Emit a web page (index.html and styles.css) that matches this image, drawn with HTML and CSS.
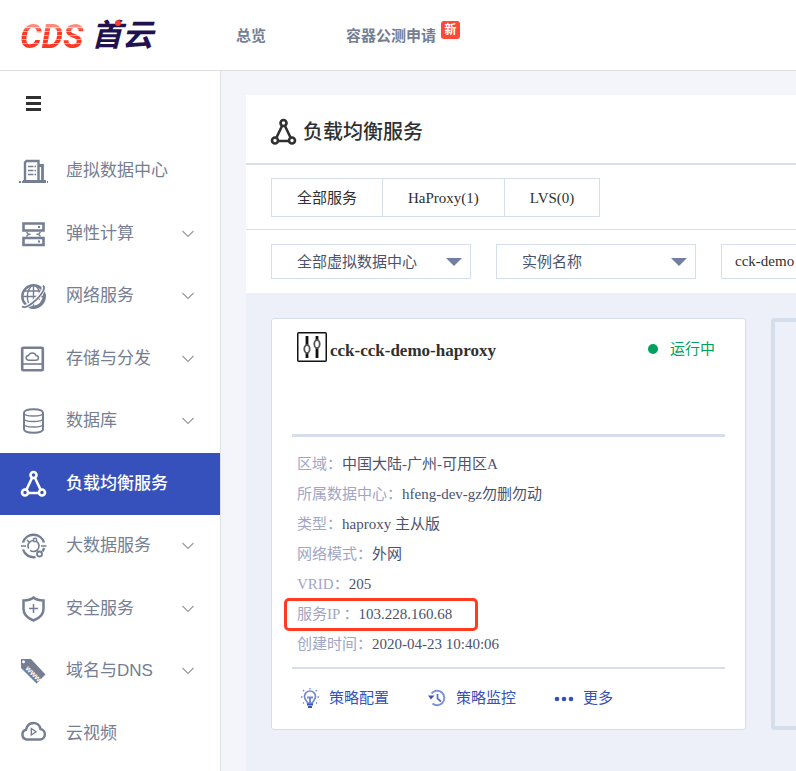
FILE: index.html
```html
<!DOCTYPE html>
<html lang="zh-CN">
<head>
<meta charset="utf-8">
<meta name="viewport" content="width=device-width, initial-scale=1">
<title>负载均衡服务</title>
<link rel="stylesheet" href="styles.css">
</head>
<body>
<svg class="sprite" aria-hidden="true">
  <symbol id="triangle" viewBox="0 0 30 30">
    <g fill="none" stroke="currentColor" stroke-width="2.6">
      <circle cx="15.500" cy="6" r="3"/><circle cx="7" cy="23.500" r="3"/><circle cx="24" cy="23.500" r="3"/>
      <path d="M14 9 8.500 20.500M17 9 22.500 20.500M10 24H21"/>
    </g>
  </symbol>
  <symbol id="chevron" viewBox="0 0 12 8">
    <path d="M.5 1 6 6.500 11.500 1" fill="none" stroke="currentColor" stroke-width="1.100"/>
  </symbol>
</svg>
<header class="topbar">
  <a class="logo" href="#"><span class="logo-latin">CDS</span><span class="logo-han">首云</span></a>
  <nav class="topnav">
    <a href="#">总览</a>
    <a href="#">容器公测申请<span class="new">新</span></a>
  </nav>
</header>
<div class="shell">
  <aside class="sidebar">
    <button class="toggle" type="button" aria-label="菜单">
      <svg width="15" height="15" viewBox="0 0 15 15"><path d="M0 1.500H15M0 7.500H15M0 13.500H15" stroke="currentColor" stroke-width="3"/></svg>
    </button>
    <ul class="menu">
      <li><a href="#">
        <svg class="icon" viewBox="0 0 30 30"><g fill="none" stroke="currentColor"><path d="M7 25V6.500L8.500 5H20.500V25" stroke-width="2.400"/><path d="M21 9.500H24.500V25" stroke-width="2.800"/><path d="M10 10.500H18M10 14.500H18M10 18.500H18" stroke-width="1.400" stroke-dasharray="5.500 1"/><path d="M5 25H28" stroke-width="2"/><path d="M1 26H31" stroke-width="2" stroke-dasharray="2 1 24 1"/></g></svg>
        <span>虚拟数据中心</span></a></li>
      <li><a href="#">
        <svg class="icon" viewBox="0 0 30 30"><g fill="none" stroke="currentColor"><path d="M5.500 4.500H25.500V11.500H5.500ZM5.500 19H25.500V26H5.500Z" stroke-width="2.600"/><path d="M8.500 13 10.500 15.200 8.500 17.500M12.500 15.200H10M22.500 13 20.500 15.200 22.500 17.500M18.500 15.200H21" stroke-width="1.400"/><path d="M20 8H22M20 22.500H22" stroke-width="2"/></g></svg>
        <span>弹性计算</span><svg class="chev"><use href="#chevron"/></svg></a></li>
      <li><a href="#">
        <svg class="icon" viewBox="0 0 30 30"><g fill="none" stroke="currentColor"><circle cx="15.500" cy="15.500" r="11.200" stroke-width="2.400"/><path d="M5 15.500H26M6.500 10H24.500M15.500 5V26M13.500 5C8.500 10 8.500 18 11 23.500M18 5C22 9 22.500 14 21 19" stroke-width="1.400"/><path d="M25 5C28 9 19 18 14 22 9 26 5 27 4.500 25" stroke="#fff" stroke-width="4"/><path d="M25 4.500C29 8 20 18 14.500 22 9.500 26 5 27.500 4.500 25" stroke-width="1.800"/><path d="M26.500 13C26 20 22 26 14 26.500" stroke-width="2.800"/></g></svg>
        <span>网络服务</span><svg class="chev"><use href="#chevron"/></svg></a></li>
      <li><a href="#">
        <svg class="icon" viewBox="0 0 30 30"><g fill="none" stroke="currentColor"><rect x="4.200" y="3.700" width="20.600" height="22.600" rx="1" stroke-width="2.600"/><path d="M5 20H24" stroke-width="1.600"/><path d="M11 16.200C7 16.200 7.500 11.500 10.500 11.500 12 8 17 8.500 18 11.500 21 11.500 21.500 16.200 18 16.200Z" stroke-width="1.500"/></g></svg>
        <span>存储与分发</span><svg class="chev"><use href="#chevron"/></svg></a></li>
      <li><a href="#">
        <svg class="icon" viewBox="0 0 30 30"><g fill="none" stroke="currentColor" stroke-width="2"><path d="M6 7V23C6 28 25 28 25 23V7C25 2 6 2 6 7Z"/><path d="M6 7C6 11 25 11 25 7M6 12.500C6 16.500 25 16.500 25 12.500M6 18C6 22 25 22 25 18" stroke-width="1.400"/></g></svg>
        <span>数据库</span><svg class="chev"><use href="#chevron"/></svg></a></li>
      <li class="active"><a href="#" aria-current="page">
        <svg class="icon"><use href="#triangle"/></svg>
        <span>负载均衡服务</span></a></li>
      <li><a href="#">
        <svg class="icon" viewBox="0 0 30 30"><g fill="none" stroke="currentColor"><path d="M5 11.500A11 11 0 0 1 26 11.500M26.200 17 24.500 20.500M5 18.500A11 11 0 0 0 17.500 26" stroke-width="2.400"/><circle cx="15.500" cy="15" r="5.500" stroke-width="1.600" stroke-dasharray="12 2"/><path d="M3 15H8M23 15H28.500M9 9 11 11M20 20 21 21" stroke-width="1.500"/><circle cx="17" cy="9" r="1.700" stroke-width="1.500" fill="#fff"/><circle cx="21.500" cy="23" r="2.500" stroke-width="1.800"/></g></svg>
        <span>大数据服务</span><svg class="chev"><use href="#chevron"/></svg></a></li>
      <li><a href="#">
        <svg class="icon" viewBox="0 0 30 30"><g fill="none" stroke="currentColor"><path d="M15.500 3.500C13 5.500 9 6.500 5.500 6.500V15C5.500 20 9 24 15.500 26.500 22 24 25.500 20 25.500 15V6.500C22 6.500 18 5.500 15.500 3.500Z" stroke-width="2.500"/><path d="M11 14.500H20M15.500 10V19" stroke-width="1.500"/></g></svg>
        <span>安全服务</span><svg class="chev"><use href="#chevron"/></svg></a></li>
      <li><a href="#">
        <svg class="icon" viewBox="0 0 30 30"><path d="M3 3H13L27.500 18.500 18.500 27.500 3 12Z" fill="currentColor"/><circle cx="5.500" cy="5.800" r="1.500" fill="#fff"/><text class="tag-text" x="7" y="13" transform="rotate(45 7 13)">www</text></svg>
        <span>域名与DNS</span><svg class="chev"><use href="#chevron"/></svg></a></li>
      <li><a href="#">
        <svg class="icon" viewBox="0 0 30 30"><g fill="none" stroke="currentColor"><path d="M8.500 20.500A5 5 0 0 1 8 10.800C10 1.500 21 2 22.500 10A5.300 5.300 0 0 1 22 20.500Z" stroke-width="2.500"/><path d="M13.300 9.500V16L18 12.700Z" stroke-width="1.400"/></g></svg>
        <span>云视频</span></a></li>
    </ul>
  </aside>
  <main class="content">
    <section class="panel">
      <h1 class="title"><svg class="icon"><use href="#triangle"/></svg>负载均衡服务</h1>
      <div class="tabs-row">
        <div class="tabs">
          <button type="button">全部服务</button><button type="button">HaProxy(1)</button><button type="button">LVS(0)</button>
        </div>
      </div>
      <form class="filters">
        <div class="pick"><select aria-label="数据中心"><option>全部虚拟数据中心</option></select></div>
        <div class="pick"><select aria-label="查询字段"><option>实例名称</option></select></div>
        <input class="search" type="text" aria-label="关键字" value="cck-demo">
      </form>
    </section>
    <section class="cards">
      <article class="card">
        <div class="card-head">
          <svg class="badge" viewBox="0 0 30 30"><rect x=".75" y=".75" width="28.500" height="28.500" rx="1" fill="#fff" stroke="#111" stroke-width="1.500"/><g stroke="#111" fill="#fff"><path d="M10 4V26M20 4V26" stroke-width="2.800"/><ellipse cx="10" cy="17" rx="2.700" ry="4" stroke="#555" stroke-width="1.800"/><ellipse cx="20" cy="12" rx="2.700" ry="4" stroke="#555" stroke-width="1.800"/></g></svg>
          <h2>cck-cck-demo-haproxy</h2>
          <span class="status">运行中</span>
        </div>
        <dl class="facts">
          <div><dt>区域：</dt><dd>中国大陆-广州-可用区A</dd></div>
          <div><dt>所属数据中心：</dt><dd>hfeng-dev-gz勿删勿动</dd></div>
          <div><dt>类型：</dt><dd>haproxy 主从版</dd></div>
          <div><dt>网络模式：</dt><dd>外网</dd></div>
          <div><dt>VRID：</dt><dd>205</dd></div>
          <div class="marked"><dt>服务IP ：</dt><dd>103.228.160.68</dd></div>
          <div><dt>创建时间：</dt><dd>2020-04-23 10:40:06</dd></div>
        </dl>
        <div class="actions">
          <a href="#"><svg viewBox="0 0 20 20"><g fill="none" stroke="#7488d2"><path d="M7.500 15C7.500 13 4.500 12 4.500 8.500A5.500 5.500 0 0 1 15.500 8.500C15.500 12 12.500 13 12.500 15Z" stroke-width="1.700"/><path d="M10 15V10M7 9.500H13" stroke-width="2"/><path d="M10 0V1.500M3 2 4.200 3.200M17 2 15.800 3.200M1 9H2.500M17.500 9H19M3 15.500 4 14.500M17 15.500 16 14.500" stroke-width="1.300"/><path d="M7 16.500H13M8 19H12" stroke="#3b54bd" stroke-width="1.800"/></g></svg>策略配置</a>
          <a href="#"><svg viewBox="0 0 20 20"><path d="M4.500 5.500A7.200 7.200 0 1 1 5.500 15.500" fill="none" stroke="#8193d6" stroke-width="2"/><path d="M10.500 6V10.500L14 13.500" fill="none" stroke="#5c71c8" stroke-width="1.800"/><path d="M1 7.500H7.500L4 11.500Z" fill="#3b54bd"/></svg>策略监控</a>
          <a href="#"><svg viewBox="0 0 20 20"><g fill="#3650bb"><circle cx="3" cy="11" r="2.300"/><circle cx="10" cy="11" r="2.300"/><circle cx="17" cy="11" r="2.300"/></g></svg>更多</a>
        </div>
      </article>
      <article class="card empty"></article>
    </section>
  </main>
</div>
</body>
</html>
```
FILE: styles.css
```css
*, *::before, *::after { box-sizing: border-box; }

body {
  margin: 0;
  min-height: 100vh;
  display: flex;
  flex-direction: column;
  overflow: hidden;
  background: #f4f5fa;
  color: #303030;
  font: 15px/20px "Liberation Serif", "Noto Sans CJK SC", serif;
}

a { color: inherit; text-decoration: none; }
button, select, input { font: inherit; color: inherit; }
h1, h2, ul, dl, dd { margin: 0; padding: 0; }
.sprite { display: none; }

.topbar {
  display: flex;
  align-items: center;
  height: 71px;
  padding-top: 2px;
  background: #fff;
  border-bottom: 1px solid #dedede;
  font-family: "Liberation Sans", "Noto Sans CJK SC", sans-serif;
}

.logo {
  position: relative;
  display: flex;
  align-items: center;
  gap: 6px;
  width: 216px;
  padding-left: 20px;
  line-height: 40px;
}

.logo::after {
  content: "";
  position: absolute;
  left: 115px;
  top: 4px;
  width: 6px;
  height: 6px;
  border-radius: 50%;
  background: #ff3e2d;
}

.logo-latin {
  padding-right: 2px;
  font: italic bold 34px/40px Roboto, "Liberation Sans", sans-serif;
  color: transparent;
  background:
    repeating-linear-gradient(transparent 0 3px, rgba(255, 255, 255, .6) 3px 4px) 0 0 / 100% 28px no-repeat,
    linear-gradient(#ff8a7c 11px, #ff3823 15px);
  background-clip: text;
  -webkit-background-clip: text;
}

.logo-han { color: #21114f; font-size: 31px; font-style: italic; font-weight: bold; }

.topnav {
  display: flex;
  gap: 80px;
  padding-left: 20px;
  font-weight: bold;
  color: #757e93;
  white-space: nowrap;
}

.topnav a { position: relative; }

.new {
  position: absolute;
  left: 95px;
  top: -5px;
  width: 19px;
  height: 18px;
  border-radius: 3px;
  background: #ff4938;
  color: #fff;
  font-size: 12px;
  line-height: 18px;
  text-align: center;
}

.shell { display: flex; flex: 1; }

.sidebar {
  flex: 0 0 221px;
  background: #fff;
  border-right: 1px solid #e0e1e4;
  font-family: "Liberation Sans", "Noto Sans CJK SC", sans-serif;
}

.toggle {
  display: flex;
  align-items: center;
  height: 65px;
  margin-bottom: 4px;
  padding: 0 26px;
  border: 0;
  background: none;
  color: #303030;
}

.menu {
  display: grid;
  grid-template-rows: repeat(10, 1fr);
  height: 625px;
  list-style: none;
  color: #757e93;
  font-size: 17px;
}

.menu a {
  display: flex;
  align-items: center;
  gap: 18px;
  height: 100%;
  padding: 0 26px 0 18px;
}

.icon { width: 30px; height: 30px; }
.tag-text { fill: #fff; font-size: 8px; font-weight: bold; }
.chev { width: 12px; height: 8px; margin-left: auto; color: #999; }
.active { background: #3651bb; color: #fff; font-weight: 500; }

.content {
  flex: 1;
  display: flex;
  flex-direction: column;
  min-width: 0;
  padding: 24px 0 0 25px;
  overflow: hidden;
}

.panel { background: #fff; }

.title {
  display: flex;
  align-items: center;
  gap: 5px;
  height: 70px;
  padding: 6px 22px 0;
  border-bottom: 2px solid #d7deeb;
  font-size: 20px;
  font-weight: 500;
}

.tabs-row { padding: 13px 25px 12px; border-bottom: 1px solid #d7deeb; }
.tabs { display: flex; }

.tabs button {
  height: 39px;
  padding: 0 25px;
  border: 1px solid #d7deeb;
  border-right-width: 0;
  background: #fff;
}

.tabs button:last-child { border-right-width: 1px; }
.filters { display: flex; gap: 25px; padding: 14px 25px; }
.pick { position: relative; flex: 0 0 200px; }

.pick::after {
  content: "";
  position: absolute;
  right: 9px;
  top: 14px;
  border: 8px solid transparent;
  border-top-color: #727ea4;
  border-bottom-width: 0;
  pointer-events: none;
}

.pick select {
  appearance: none;
  width: 100%;
  height: 35px;
  padding: 0 25px;
  border: 1px solid #d7deeb;
  border-radius: 0;
  background: #fff;
  color: #4b536c;
}

.search {
  flex: 0 0 200px;
  height: 35px;
  padding: 0 13px;
  border: 1px solid #d7deeb;
}

.cards {
  flex: 1;
  display: flex;
  align-items: flex-start;
  gap: 25px;
  padding: 25px;
  background: #edf0f9;
}

.card {
  flex: 0 0 475px;
  padding: 0 20px 20px;
  border: 1px solid #d7deeb;
  border-radius: 3px;
  background: #fff;
}

.empty { align-self: stretch; margin-bottom: 16px; border-width: 4px; background: none; }

.card-head {
  display: flex;
  align-items: flex-start;
  gap: 3px;
  height: 118px;
  padding: 13px 10px 0 5px;
  border-bottom: 3px solid #d7deeb;
}

.badge { width: 30px; height: 30px; }
.card-head h2 { font-size: 17px; line-height: 38px; }

.status {
  display: flex;
  align-items: center;
  gap: 12px;
  margin-left: auto;
  line-height: 34px;
  color: #00a05e;
}

.status::before {
  content: "";
  width: 10px;
  height: 10px;
  border-radius: 50%;
  background: currentColor;
}

.facts { padding: 12px 5px 8px; border-bottom: 2px solid #d7deeb; line-height: 30px; }
.facts div { position: relative; display: flex; height: 30px; }
.facts dt { color: #a0a6c4; white-space: pre; }
.facts dd { color: #4b5270; }

.marked::after {
  content: "";
  position: absolute;
  left: -13px;
  top: -1px;
  width: 194px;
  height: 33px;
  border: 3px solid #ff3b20;
  border-radius: 5px;
}

.actions { display: flex; gap: 38px; padding: 18px 8px 0; color: #3650bb; line-height: 22px; }
.actions a { display: flex; align-items: center; gap: 9px; }
.actions svg { width: 20px; height: 20px; }
```
